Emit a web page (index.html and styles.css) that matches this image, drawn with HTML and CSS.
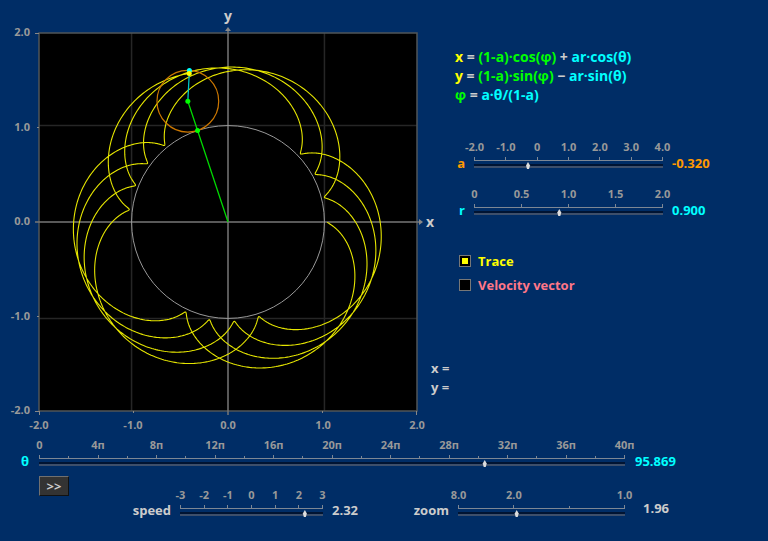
FILE: index.html
```html
<!DOCTYPE html>
<html lang="en">
<head>
    <meta charset="UTF-8">
    <meta name="viewport" content="width=device-width, initial-scale=1.0">
    <title>Trochoid</title>
    <link rel="stylesheet" href="styles.css">
</head>
<body>

    <main class="top">
        <svg class="plot" viewBox="0 0 424 433" role="img" aria-label="Trochoid plot">
            <rect class="back" x="39" y="33" width="378" height="378"/>
            <g id="grid" class="grid">
                <path id="gridLines"/>
            </g>
            <path class="frame" d="M39 33H417V411H39Z"/>
            <path class="axis" d="M228 30V415"/>
            <path class="axis" d="M35 222H420"/>
            <path class="marks" d="M35 33.500H39M37 127.500H39M37 316.500H39M35 411.500H39M39.500 411V415M133.500 411V413M322.500 411V413M416.500 411V415"/>
            <path class="arrow" d="M225 31L228 27L231 31Z"/>
            <path class="arrow" d="M419 219L423 222L419 225Z"/>
            <g class="yticks">
                <text x="30" y="36">2.0</text>
                <text x="30" y="131">1.0</text>
                <text x="30" y="225">0.0</text>
                <text x="30" y="320">-1.0</text>
                <text x="30" y="414">-2.0</text>
            </g>
            <g class="xticks">
                <text x="39" y="429">-2.0</text>
                <text x="133" y="429">-1.0</text>
                <text x="228" y="429">0.0</text>
                <text x="323" y="429">1.0</text>
                <text x="417" y="429">2.0</text>
            </g>
            <text class="axis-name" x="228" y="21">y</text>
            <text class="axis-name" x="430" y="227">x</text>
            <circle id="fixed" class="fixed" cx="228" cy="222"/>
            <path id="trace" class="trace"/>
            <circle id="roller" class="roller"/>
            <path id="arm" class="arm"/>
            <path id="spoke" class="spoke"/>
            <circle id="center" class="dot-green" r="2.500"/>
            <circle id="contact" class="dot-green" r="2.500"/>
            <circle id="rim" class="dot-cyan" r="2.500"/>
            <circle id="point" class="dot-yellow" r="2.500"/>
            <path id="velocity" class="velocity"/>
        </svg>

        <section class="panel">
            <div class="formulas">
                <div><span class="yellow">x</span> = <span class="green">(1-a)·cos(φ)</span> + <span class="cyan">ar·cos(θ)</span></div>
                <div><span class="yellow">y</span> = <span class="green">(1-a)·sin(φ)</span> − <span class="cyan">ar·sin(θ)</span></div>
                <div><span class="green">φ</span> = <span class="cyan">a·θ/(1-a)</span></div>
            </div>

            <div class="param">
                <label class="name orange" for="a">a</label>
                <div class="slider">
                    <ul class="ruler">
                        <li>-2.0</li><li>-1.0</li><li>0</li><li>1.0</li><li>2.0</li><li>3.0</li><li>4.0</li>
                    </ul>
                    <input type="range" id="a" min="-2" max="4" step="0.01" value="-0.32">
                </div>
                <output class="value orange" id="aOut" for="a">-0.320</output>
            </div>

            <div class="param">
                <label class="name cyan" for="r">r</label>
                <div class="slider">
                    <ul class="ruler">
                        <li>0</li><li>0.5</li><li>1.0</li><li>1.5</li><li>2.0</li>
                    </ul>
                    <input type="range" id="r" min="0" max="2" step="0.01" value="0.9">
                </div>
                <output class="value cyan" id="rOut" for="r">0.900</output>
            </div>

            <div class="options">
                <label class="yellow"><input type="checkbox" id="showTrace" checked>Trace</label>
                <label class="pink"><input type="checkbox" id="showVelocity">Velocity vector</label>
            </div>

            <div class="readout">
                <div>x =</div>
                <div>y =</div>
            </div>
        </section>
    </main>

    <div class="param theta">
        <label class="name cyan" for="theta">θ</label>
        <div class="slider">
            <ul class="ruler">
                <li>0</li><li class="minor"></li><li>4п</li><li class="minor"></li><li>8п</li><li class="minor"></li><li>12п</li><li class="minor"></li><li>16п</li><li class="minor"></li><li>20п</li><li class="minor"></li><li>24п</li><li class="minor"></li><li>28п</li><li class="minor"></li><li>32п</li><li class="minor"></li><li>36п</li><li class="minor"></li><li>40п</li>
            </ul>
            <input type="range" id="theta" min="0" max="125.664" step="0.001" value="95.869">
        </div>
        <output class="value cyan" id="thetaOut" for="theta">95.869</output>
    </div>

    <div class="controls">
        <button type="button" id="play">&gt;&gt;</button>
        <label class="name" for="speed">speed</label>
        <div class="slider">
            <ul class="ruler">
                <li>-3</li><li>-2</li><li>-1</li><li>0</li><li>1</li><li>2</li><li>3</li>
            </ul>
            <input type="range" id="speed" min="-3" max="3" step="0.01" value="2.32">
        </div>
        <output class="value" id="speedOut" for="speed">2.32</output>
        <label class="name" for="zoom">zoom</label>
        <div class="slider">
            <ul class="ruler">
                <li>8.0</li><li>2.0</li><li class="minor"></li><li>1.0</li>
            </ul>
            <input type="range" id="zoom" min="0" max="1" step="0.001" value="0.347">
        </div>
        <output class="value zoom-value" id="zoomOut" for="zoom">1.96</output>
    </div>

    <script src="script.js"></script>
</body>
</html>
```

FILE: styles.css
```css
* {
    box-sizing: border-box;
}
body {
    margin: 0;
    background-color: #002d66;
    color: #cccccc;
    font-family: "Open Sans", "Noto Sans", sans-serif;
    font-size: 13px;
    font-weight: bold;
    line-height: 19px;
}
.yellow { color: #ffff00; }
.green { color: #00ff00; }
.cyan { color: #00ffff; }
.orange { color: #ff9900; }
.pink { color: #ff7788; }

.top {
    display: grid;
    grid-template-columns: 424fr 344fr;
}

/* plot */
.plot {
    display: block;
    width: 100%;
    overflow: visible;
}
.plot path, .plot circle {
    fill: none;
}
.plot .back {
    fill: #000000;
}
.plot .grid path {
    stroke: #262626;
    stroke-width: 1.5;
}
.plot .frame {
    stroke: #505558;
    stroke-width: 1.5;
}
.plot .axis {
    stroke: #777777;
    stroke-width: 1.5;
}
.plot .marks {
    stroke: #888888;
}
.plot .arrow {
    fill: #888888;
}
.plot text {
    fill: #999999;
    font-size: 11px;
}
.plot .yticks {
    text-anchor: end;
}
.plot .xticks {
    text-anchor: middle;
}
.plot .axis-name {
    fill: #cccccc;
    font-size: 14px;
    text-anchor: middle;
}
.plot .fixed { stroke: #999999; }
.plot .trace { stroke: #e6e600; stroke-width: 1.1; }
.plot .roller { stroke: #cc7700; stroke-width: 1.2; }
.plot .spoke { stroke: #00dd00; stroke-width: 1.25; }
.plot .arm { stroke: #00cccc; stroke-width: 1.25; }
.plot .velocity { stroke: #ff7788; }
.plot .dot-green { fill: #00ff00; }
.plot .dot-cyan { fill: #00ffff; }
.plot .dot-yellow { fill: #ffff00; }

/* right side */
.panel {
    padding-top: 47px;
}
.formulas {
    padding-left: 31px;
    margin-bottom: 36px;
    font-size: 14px;
}
.param {
    display: grid;
    grid-template-columns: 41px 1fr 96px;
    column-gap: 9px;
    margin-bottom: 14px;
}
.options {
    padding: 15px 0 0 35px;
}
.options label {
    display: flex;
    align-items: center;
    gap: 7px;
    height: 24px;
}
.options input {
    appearance: none;
    width: 12px;
    height: 12px;
    margin: 0;
    border: 1px solid #777777;
    background-color: #000000;
}
.options input:checked {
    background-color: #ffff00;
    box-shadow: inset 0 0 0 2px #000000;
}
.readout {
    padding: 62px 0 0 7px;
}

/* sliders */
.name, .value {
    margin-top: 14px;
}
.name {
    text-align: right;
}
.ruler {
    display: flex;
    justify-content: space-between;
    align-items: flex-end;
    list-style: none;
    margin: 0;
    padding: 0;
    border-bottom: 1px solid #7d8794;
    color: #999999;
    font-size: 11px;
    line-height: 14px;
}
.ruler li {
    display: flex;
    flex-direction: column;
    align-items: center;
    width: 1px;
    gap: 3px;
    white-space: nowrap;
}
.ruler li::after {
    content: "";
    width: 1px;
    height: 3px;
    background-color: #7d8794;
}
.ruler .minor::after {
    height: 2px;
}
.slider input {
    appearance: none;
    display: block;
    width: 100%;
    height: 10px;
    margin: 0;
    background: none;
    cursor: pointer;
}
.slider input::-webkit-slider-runnable-track {
    height: 4px;
    background: linear-gradient(#001433 50%, #3d4f6b 50%);
}
.slider input::-webkit-slider-thumb {
    appearance: none;
    width: 5px;
    height: 7px;
    margin-top: -2px;
    background-color: #dddddd;
    clip-path: polygon(50% 0, 90% 50%, 70% 100%, 30% 100%, 10% 50%);
}

/* bottom rows */
.theta {
    grid-template-columns: 29px 1fr 133px;
    column-gap: 10px;
    margin: 5px 0 0;
}
.controls {
    display: grid;
    grid-template-columns: 30px 93px 143fr 40px 68px 167fr 134px;
    column-gap: 9px;
    align-items: start;
    padding: 5px 0 0 39px;
}
.controls .name, .controls .value {
    margin-top: 25px;
}
.controls .slider {
    margin-top: 12px;
}
.controls .zoom-value {
    margin-top: 23px;
    padding-left: 9px;
}
.controls button {
    height: 20px;
    padding: 0;
    border: 1px solid;
    border-color: #707070 #111111 #111111 #707070;
    background-color: #333333;
    color: #cccccc;
    font: inherit;
    line-height: 16px;
    cursor: pointer;
}
```

FILE: script.js
```js
const CX = 228;
const CY = 222;
const MAX_THETA = 40 * Math.PI;

function el(id) {
    return document.getElementById(id);
}

function num(id) {
    return parseFloat(el(id).value);
}

// slider position -> half width of the plot
function zoomValue(t) {
    if (t < 1 / 3) return 2 / (0.25 + 2.25 * t);
    return 2 / (1 + 1.5 * (t - 1 / 3));
}

function curve(a, r, theta) {
    let phi = a * theta / (1 - a);
    return [
        (1 - a) * Math.cos(phi) + a * r * Math.cos(theta),
        (1 - a) * Math.sin(phi) - a * r * Math.sin(theta)
    ];
}

function draw() {
    let a = num("a");
    if (a === 1) a = 0.999;
    let r = num("r");
    let theta = num("theta");
    let zoom = zoomValue(num("zoom"));
    let scale = 189 / zoom;
    let px = p => [(CX + p[0] * scale).toFixed(2), (CY - p[1] * scale).toFixed(2)];
    let place = (id, p) => {
        el(id).setAttribute("cx", px(p)[0]);
        el(id).setAttribute("cy", px(p)[1]);
    };

    let grid = "";
    for (let n = 1; n * scale < 189; n++) {
        for (let s of [-1, 1]) {
            let d = s * n * scale;
            grid += `M${CX + d} 33V411M39 ${CY + d}H417`;
        }
    }
    el("gridLines").setAttribute("d", grid);

    let points = [];
    for (let t = 0; t < theta; t += 0.04) points.push(px(curve(a, r, t)).join(" "));
    points.push(px(curve(a, r, theta)).join(" "));
    el("trace").setAttribute("d", el("showTrace").checked ? "M" + points.join("L") : "");

    let phi = a * theta / (1 - a);
    let contact = [Math.cos(phi), Math.sin(phi)];
    let center = [(1 - a) * contact[0], (1 - a) * contact[1]];
    let rim = curve(a, 1, theta);
    let point = curve(a, r, theta);

    el("fixed").setAttribute("r", scale);
    el("roller").setAttribute("r", Math.abs(a) * scale);
    place("roller", center);
    place("center", center);
    place("contact", contact);
    place("rim", rim);
    place("point", point);
    el("spoke").setAttribute("d", `M${CX} ${CY}L${px(center).join(" ")}`);
    el("arm").setAttribute("d", `M${px(center).join(" ")}L${px(rim).join(" ")}`);

    let next = curve(a, r, theta + 0.001);
    let tip = [point[0] + (next[0] - point[0]) * 1000, point[1] + (next[1] - point[1]) * 1000];
    el("velocity").setAttribute("d", el("showVelocity").checked ? `M${px(point).join(" ")}L${px(tip).join(" ")}` : "");

    el("aOut").value = num("a").toFixed(3);
    el("rOut").value = r.toFixed(3);
    el("thetaOut").value = theta.toFixed(3);
    el("speedOut").value = num("speed").toFixed(2);
    el("zoomOut").value = zoom.toFixed(2);
}

let playing = false;

function step() {
    if (!playing) return;
    let theta = num("theta") + num("speed") / 60;
    if (theta > MAX_THETA) theta = 0;
    if (theta < 0) theta = MAX_THETA;
    el("theta").value = theta;
    draw();
    requestAnimationFrame(step);
}

el("play").addEventListener("click", () => {
    playing = !playing;
    step();
});
document.querySelectorAll("input").forEach(input => input.addEventListener("input", draw));

draw();
```
